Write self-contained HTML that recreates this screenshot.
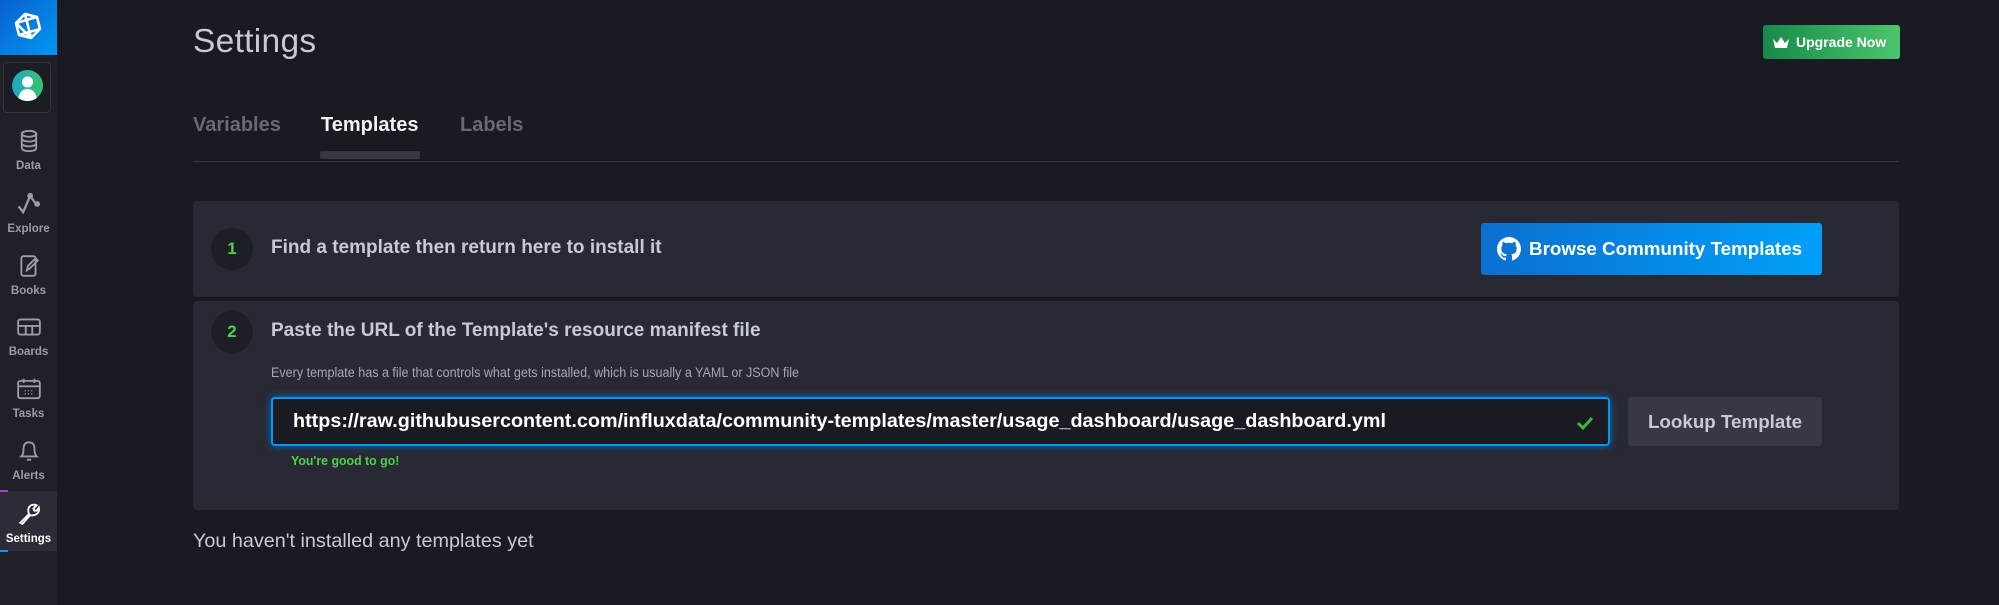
<!DOCTYPE html>
<html><head><meta charset="utf-8"><style>
*{margin:0;padding:0;box-sizing:border-box}
body{width:1999px;height:605px;background:#1a1a22;font-family:"Liberation Sans",sans-serif;position:relative;overflow:hidden;color:#c6cad3}
.a{position:absolute}
#side{left:0;top:0;width:57px;height:605px;background:#202028}
.logo{left:0;top:0;width:57px;height:55px;background:linear-gradient(135deg,#0a5fd0,#0098f0)}
.nav{left:0;width:57px;text-align:center;font-size:11.5px;font-weight:bold;color:#9a9ca8;line-height:14px}
.nav svg{display:block;margin:0 auto 6px}
.panel{left:193px;width:1706px;background:#292933;border-radius:4px}
.circ{width:42px;height:42px;border-radius:50%;background:#1e1e26;color:#4ed04a;font-weight:bold;font-size:17px;text-align:center;line-height:42px}
.h{font-size:19px;color:#c6cad3;font-weight:bold}
</style></head><body>
<div id="side" class="a">
 <div class="a logo"><svg width="57" height="55" viewBox="0 0 57 55"><g fill="none" stroke="#fff" stroke-width="2.6" stroke-linejoin="round"><polygon points="25,14 37,17 40,29 31,38 19,35 16,23"/><path d="M25,14 L31,38 M16,23 L37,17 M19,35 L40,29 M16,23 L31,38"/></g></svg></div>
 <div class="a" style="left:3px;top:62px;width:48px;height:51px;border:1px solid #34343e;border-radius:4px;background:#1c1c24"></div>
 <div class="a" style="left:12px;top:70px;width:31px;height:31px;border-radius:50%;background:linear-gradient(90deg,#1aa8c8,#3cc26a);overflow:hidden"><svg width="31" height="31" viewBox="0 0 31 31"><circle cx="15.5" cy="12" r="5.5" fill="#fff"/><path d="M6,31 Q7,19 15.5,19 Q24,19 25,31Z" fill="#fff"/></svg></div>
 <div class="a nav" style="top:129px"><svg width="24" height="24" viewBox="0 0 18 20" fill="none" stroke="#9a9ca8" stroke-width="1.6"><ellipse cx="9" cy="4" rx="6" ry="2.5"/><path d="M3,4v12c0,1.5 3,2.5 6,2.5s6-1 6-2.5V4M3,8c0,1.5 3,2.5 6,2.5s6-1 6-2.5M3,12c0,1.5 3,2.5 6,2.5s6-1 6-2.5"/></svg>Data</div>
 <div class="a nav" style="top:192px"><svg width="28" height="24" viewBox="0 0 24 20" fill="none" stroke="#9a9ca8" stroke-width="2"><path d="M3,12 L7,17 L13,3 L18,10"/><circle cx="13" cy="3" r="1.5" fill="#9a9ca8"/><circle cx="19" cy="10" r="1.5" fill="#9a9ca8"/></svg>Explore</div>
 <div class="a nav" style="top:254px"><svg width="24" height="24" viewBox="0 0 20 22" fill="none" stroke="#9a9ca8" stroke-width="1.7"><rect x="3" y="2" width="13" height="18" rx="2"/><path d="M8,15 L9,11 L16,4 L18,6 L11,13Z"/></svg>Books</div>
 <div class="a nav" style="top:315px"><svg width="26" height="24" viewBox="0 0 24 20" fill="none" stroke="#9a9ca8" stroke-width="1.7"><rect x="2" y="3" width="20" height="14" rx="2"/><path d="M2,9h20M9,9v8M15,9v8"/></svg>Boards</div>
 <div class="a nav" style="top:377px"><svg width="26" height="24" viewBox="0 0 24 21" fill="none" stroke="#9a9ca8" stroke-width="1.7"><rect x="2" y="3" width="20" height="16" rx="2"/><path d="M2,8h20M7,1v4M17,1v4"/><path d="M8,12h1M11,12h1M14,12h1M8,15h1M11,15h1M14,15h1" stroke-width="1.4"/></svg>Tasks</div>
 <div class="a" style="left:0;top:491px;width:57px;height:60px;background:#2c2c36"></div>
 <div class="a" style="left:0;top:490px;width:8px;height:2px;background:#a040d0"></div>
 <div class="a" style="left:0;top:550px;width:8px;height:2px;background:#0098f0"></div>
 <div class="a nav" style="top:439px"><svg width="24" height="24" viewBox="0 0 22 22" fill="none" stroke="#9a9ca8" stroke-width="1.7"><path d="M4,16 Q6,14 6,9 Q6,3 11,3 Q16,3 16,9 Q16,14 18,16Z"/><path d="M9,19h4"/></svg>Alerts</div>
 <div class="a nav" style="top:502px;color:#fff"><svg width="26" height="24" viewBox="0 0 22 22" fill="none" stroke="#fff" stroke-width="1.7"><path d="M3,19 L11,11 Q9,5 13,3 Q16,2 18,3 L15,6 L16,8 L18,8 L20,5 Q21,9 18,11 Q15,13 12,12 L5,20Z"/></svg>Settings</div>
</div>

<div class="a" style="left:193px;top:23px;font-size:33.5px;color:#c6cad3;font-weight:300;letter-spacing:.3px">Settings</div>
<div class="a" style="left:1763px;top:25px;width:137px;height:34px;border-radius:3px;background:linear-gradient(90deg,#168a4a,#4dc46c);color:#fff;font-size:14px;font-weight:bold;line-height:34px;padding-left:33px">Upgrade Now</div>
<svg class="a" style="left:1772px;top:36px" width="18" height="13" viewBox="0 0 18 13"><path d="M1,3 L5,7 L9,1 L13,7 L17,3 L15,12 L3,12Z" fill="#fff"/></svg>

<div class="a" style="left:193px;top:114px;font-size:20px;font-weight:bold;color:#676975">Variables</div>
<div class="a" style="left:321px;top:114px;font-size:20px;font-weight:bold;color:#f2f2f5">Templates</div>
<div class="a" style="left:460px;top:114px;font-size:20px;font-weight:bold;color:#676975">Labels</div>
<div class="a" style="left:320px;top:151px;width:100px;height:8px;border-radius:2px;background:#383844"></div>
<div class="a" style="left:193px;top:161px;width:1706px;height:1px;background:#383844"></div>

<div class="a panel" style="top:201px;height:96px"></div>
<div class="a circ" style="left:211px;top:228px">1</div>
<div class="a h" style="left:271px;top:237px">Find a template then return here to install it</div>
<div class="a" style="left:1481px;top:223px;width:341px;height:52px;border-radius:3px;background:linear-gradient(90deg,#0b6fd0,#00a0f8);color:#fff;font-weight:bold;font-size:18.8px;line-height:52px;padding-left:48px">Browse Community Templates</div>
<svg class="a" style="left:1497px;top:237px" width="24" height="24" viewBox="0 0 16 16"><path fill="#fff" d="M8 0C3.58 0 0 3.58 0 8c0 3.54 2.29 6.53 5.47 7.59.4.07.55-.17.55-.38 0-.19-.01-.82-.01-1.49-2.01.37-2.53-.49-2.69-.94-.09-.23-.48-.94-.82-1.13-.28-.15-.68-.52-.01-.53.63-.01 1.08.58 1.23.82.72 1.21 1.87.87 2.33.66.07-.52.28-.87.51-1.07-1.78-.2-3.64-.89-3.64-3.95 0-.87.31-1.59.82-2.15-.08-.2-.36-1.02.08-2.12 0 0 .67-.21 2.2.82.64-.18 1.32-.27 2-.27.68 0 1.36.09 2 .27 1.53-1.04 2.2-.82 2.2-.82.44 1.1.16 1.92.08 2.12.51.56.82 1.27.82 2.15 0 3.07-1.87 3.75-3.65 3.95.29.25.54.73.54 1.48 0 1.07-.01 1.93-.01 2.2 0 .21.15.46.55.38A8.013 8.013 0 0016 8c0-4.42-3.58-8-8-8z"/></svg>

<div class="a panel" style="top:301px;height:209px"></div>
<div class="a circ" style="left:211px;top:311px">2</div>
<div class="a h" style="left:271px;top:320px">Paste the URL of the Template's resource manifest file</div>
<div class="a" style="left:271px;top:365px;font-size:13.5px;color:#a4a8b4;transform:scaleX(.93);transform-origin:left">Every template has a file that controls what gets installed, which is usually a YAML or JSON file</div>
<div class="a" style="left:271px;top:397px;width:1339px;height:49px;border:2px solid #0098f0;border-radius:4px;background:#1a1a22;box-shadow:0 0 8px #0070d0"></div>
<div class="a" style="left:293px;top:410px;font-size:19.8px;color:#fff;font-weight:bold">https://raw.githubusercontent.com/influxdata/community-templates/master/usage_dashboard/usage_dashboard.yml</div>
<svg class="a" style="left:1576px;top:415px" width="18" height="16" viewBox="0 0 18 16"><path d="M2,8 L7,13 L16,3" fill="none" stroke="#34b84a" stroke-width="3"/></svg>
<div class="a" style="left:1628px;top:397px;width:194px;height:49px;border-radius:3px;background:#383844;color:#c6cad3;font-weight:bold;font-size:18.8px;line-height:49px;text-align:center">Lookup Template</div>
<div class="a" style="left:291px;top:453px;font-size:13px;color:#4ed04a;font-weight:bold;transform:scaleX(.95);transform-origin:left">You're good to go!</div>

<div class="a" style="left:193px;top:530px;font-size:19.8px;color:#c6cad3">You haven't installed any templates yet</div>
</body></html>
